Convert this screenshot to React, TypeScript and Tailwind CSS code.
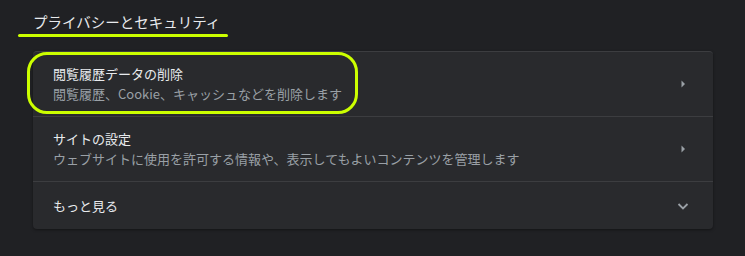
import React from "react";

const font = { fontFamily: '"Noto Sans CJK JP", "Noto Sans", Roboto, sans-serif' };

function ArrowRight() {
  return (
    <svg width="20" height="20" viewBox="0 0 20 20" className="shrink-0">
      <path d="M8.5 6.5 L12 10 L8.5 13.5 Z" fill="#9aa0a6" />
    </svg>
  );
}

function ChevronDown() {
  return (
    <svg width="20" height="20" viewBox="0 0 20 20" className="shrink-0">
      <path d="M5.5 8 L10 12.5 L14.5 8" fill="none" stroke="#9aa0a6" strokeWidth="1.8" />
    </svg>
  );
}

export default function App() {
  return (
    <div className="relative h-[256px] w-[745px] overflow-hidden bg-[#202124]" style={font}>
      <div className="pl-[33px] pt-[12px]">
        <h2 className="text-[14.5px] leading-[20px] text-[#e8eaed] font-normal">プライバシーとセキュリティ</h2>
      </div>
      <div className="ml-[33px] mt-[19px] w-[680px] rounded-[4px] bg-[#292a2d] shadow-[0_1px_3px_rgba(0,0,0,0.4)] border-t border-[#3c3d40]">
        <div className="flex h-[64px] items-center pl-[20px] pr-[20px]">
          <div className="flex-1 -mt-[1px]">
            <div className="text-[13px] leading-[20px] text-[#e8eaed]">閲覧履歴データの削除</div>
            <div className="text-[13px] leading-[20px] text-[#9aa0a6]">閲覧履歴、Cookie、キャッシュなどを削除します</div>
          </div>
          <ArrowRight />
        </div>
        <div className="flex h-[65px] items-center border-t border-[#3c3d40] pl-[20px] pr-[20px]">
          <div className="flex-1 -mt-[1px]">
            <div className="text-[13px] leading-[20px] text-[#e8eaed]">サイトの設定</div>
            <div className="text-[13px] leading-[20px] text-[#9aa0a6]">ウェブサイトに使用を許可する情報や、表示してもよいコンテンツを管理します</div>
          </div>
          <ArrowRight />
        </div>
        <div className="flex h-[48px] items-center border-t border-[#3c3d40] pl-[20px] pr-[20px]">
          <div className="flex-1 text-[13px] leading-[20px] text-[#e8eaed]">もっと見る</div>
          <ChevronDown />
        </div>
      </div>
      <div className="absolute left-[18px] top-[34px] h-[3px] w-[210px] rounded-full bg-[#ccff00]" />
      <div className="absolute left-[27px] top-[52px] h-[62px] w-[331px] rounded-[20px] border-[3px] border-[#ccff00]" />
    </div>
  );
}
